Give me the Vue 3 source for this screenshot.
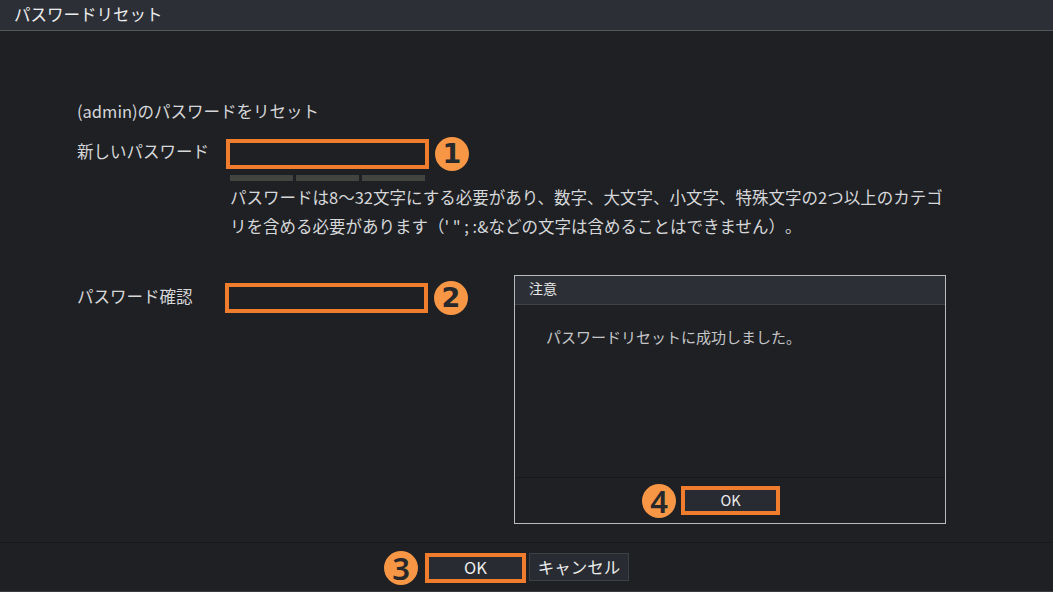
<script setup>
const bars = [0, 1, 2]
</script>

<template>
  <div class="page">
    <div class="dlg-title">パスワードリセット</div>

    <div class="dlg-body">
      <p class="intro">(admin)のパスワードをリセット</p>

      <div class="row row-new">
        <label class="lbl">新しいパスワード</label>
        <div class="field marked"></div>
        <span class="num">1</span>
      </div>
      <div class="bars">
        <i v-for="b in bars" :key="b"></i>
      </div>
      <p class="hint">パスワードは8〜32文字にする必要があり、数字、大文字、小文字、特殊文字の2つ以上のカテゴ<br />リを含める必要があります（' " ; :&amp;などの文字は含めることはできません）。</p>

      <div class="row row-confirm">
        <label class="lbl">パスワード確認</label>
        <div class="field marked"></div>
        <span class="num">2</span>
      </div>

      <!-- notice popup sits over the form -->
      <div class="notice">
        <div class="notice-head">注意</div>
        <div class="notice-msg">パスワードリセットに成功しました。</div>
        <div class="notice-foot">
          <span class="num light">4</span>
          <button class="btn marked notice-ok" type="button">OK</button>
        </div>
      </div>
    </div>

    <div class="dlg-foot">
      <span class="num light">3</span>
      <button class="btn marked foot-ok" type="button">OK</button>
      <button class="btn foot-cancel" type="button">キャンセル</button>
    </div>
  </div>
</template>

<style>
html,
body {
  background: #fff;
}
</style>

<style scoped>
.page {
  width: 1053px;
  height: 591px;
  display: flex;
  flex-direction: column;
  background: #1e2024;
  color: #d6d7d9;
  font: 16.5px/24px "Noto Sans CJK JP", "Noto Sans", sans-serif;
  border-bottom: 1px solid #3a3c40;
  box-sizing: content-box;
}
.dlg-title {
  height: 31px;
  padding-left: 14px;
  box-sizing: border-box;
  background: #2d2f37;
  border-bottom: 1px solid #55575c;
  color: #eceded;
  line-height: 28px;
  flex: none;
}
.dlg-body {
  position: relative;
  flex: 1;
  padding: 68px 0 0 77px;
}
.intro,
.hint {
  margin: 0;
}
.row {
  display: flex;
  align-items: center;
}
.row-new {
  margin-top: 14px;
}
.lbl {
  width: 149px;
  flex: none;
  position: relative;
  top: -2px;
}
.row-new .lbl {
  top: -3px;
}
.field {
  width: 203px;
  height: 30px;
  box-sizing: border-box;
}
.marked {
  border: 4px solid #f07d2e;
}
.num {
  width: 34px;
  height: 34px;
  margin-left: 6px;
  flex: none;
  border-radius: 50%;
  background: #f79645;
  color: #26282c;
  font: 700 27px/34px "DejaVu Sans", sans-serif;
  text-align: center;
}
.num.light {
  font: 600 31px/34px "Noto Sans", sans-serif;
}
.bars {
  display: flex;
  gap: 3px;
  margin: 4px 0 0 153px;
}
.bars i {
  width: 63px;
  height: 6px;
  background: #41443f;
}
.hint {
  margin: 2px 0 0 153px;
  line-height: 29px;
  white-space: nowrap;
  text-spacing-trim: space-all;
}
.row-confirm {
  margin-top: 40px;
}
.row-confirm .lbl {
  width: 148px;
}
.notice {
  position: absolute;
  left: 514px;
  top: 244px;
  width: 432px;
  height: 249px;
  box-sizing: border-box;
  display: flex;
  flex-direction: column;
  border: 1px solid #b9babb;
  background: #1e2024;
}
.notice-head {
  height: 29px;
  flex: none;
  box-sizing: border-box;
  padding-left: 14px;
  background: #2d2f37;
  border-bottom: 1px solid #3f4247;
  color: #e6e7e8;
  font-size: 14px;
  line-height: 24px;
}
.notice-msg {
  flex: 1;
  padding: 20px 0 0 31px;
  font-size: 15px;
  line-height: 24px;
  color: #c5c6c8;
}
.notice-foot {
  height: 46px;
  flex: none;
  box-sizing: border-box;
  border-top: 1px solid #17181b;
  display: flex;
  align-items: center;
  justify-content: center;
  gap: 5px;
  padding-right: 38px;
}
.notice-foot .num {
  margin-left: 0;
}
.btn {
  width: 100px;
  height: 28px;
  padding: 0;
  box-sizing: border-box;
  border: 1px solid #3d4045;
  background: #282b31;
  color: #eceded;
  font: 16.5px/20px "Noto Sans CJK JP", "Noto Sans", sans-serif;
}
.btn.marked {
  border: 4px solid #f07d2e;
  padding-bottom: 2px;
}
.notice-ok {
  width: 99px;
  height: 29px;
  font-size: 14.5px;
}
.dlg-foot {
  height: 49px;
  flex: none;
  box-sizing: border-box;
  border-top: 1px solid #17181b;
  padding: 2px 40px 0 0;
  display: flex;
  align-items: center;
  justify-content: center;
}
.dlg-foot .num {
  margin: 0 7px 0 0;
}
.foot-ok {
  width: 101px;
  height: 30px;
  margin-right: 3px;
}
.foot-cancel {
  margin-bottom: 2px;
}
</style>
